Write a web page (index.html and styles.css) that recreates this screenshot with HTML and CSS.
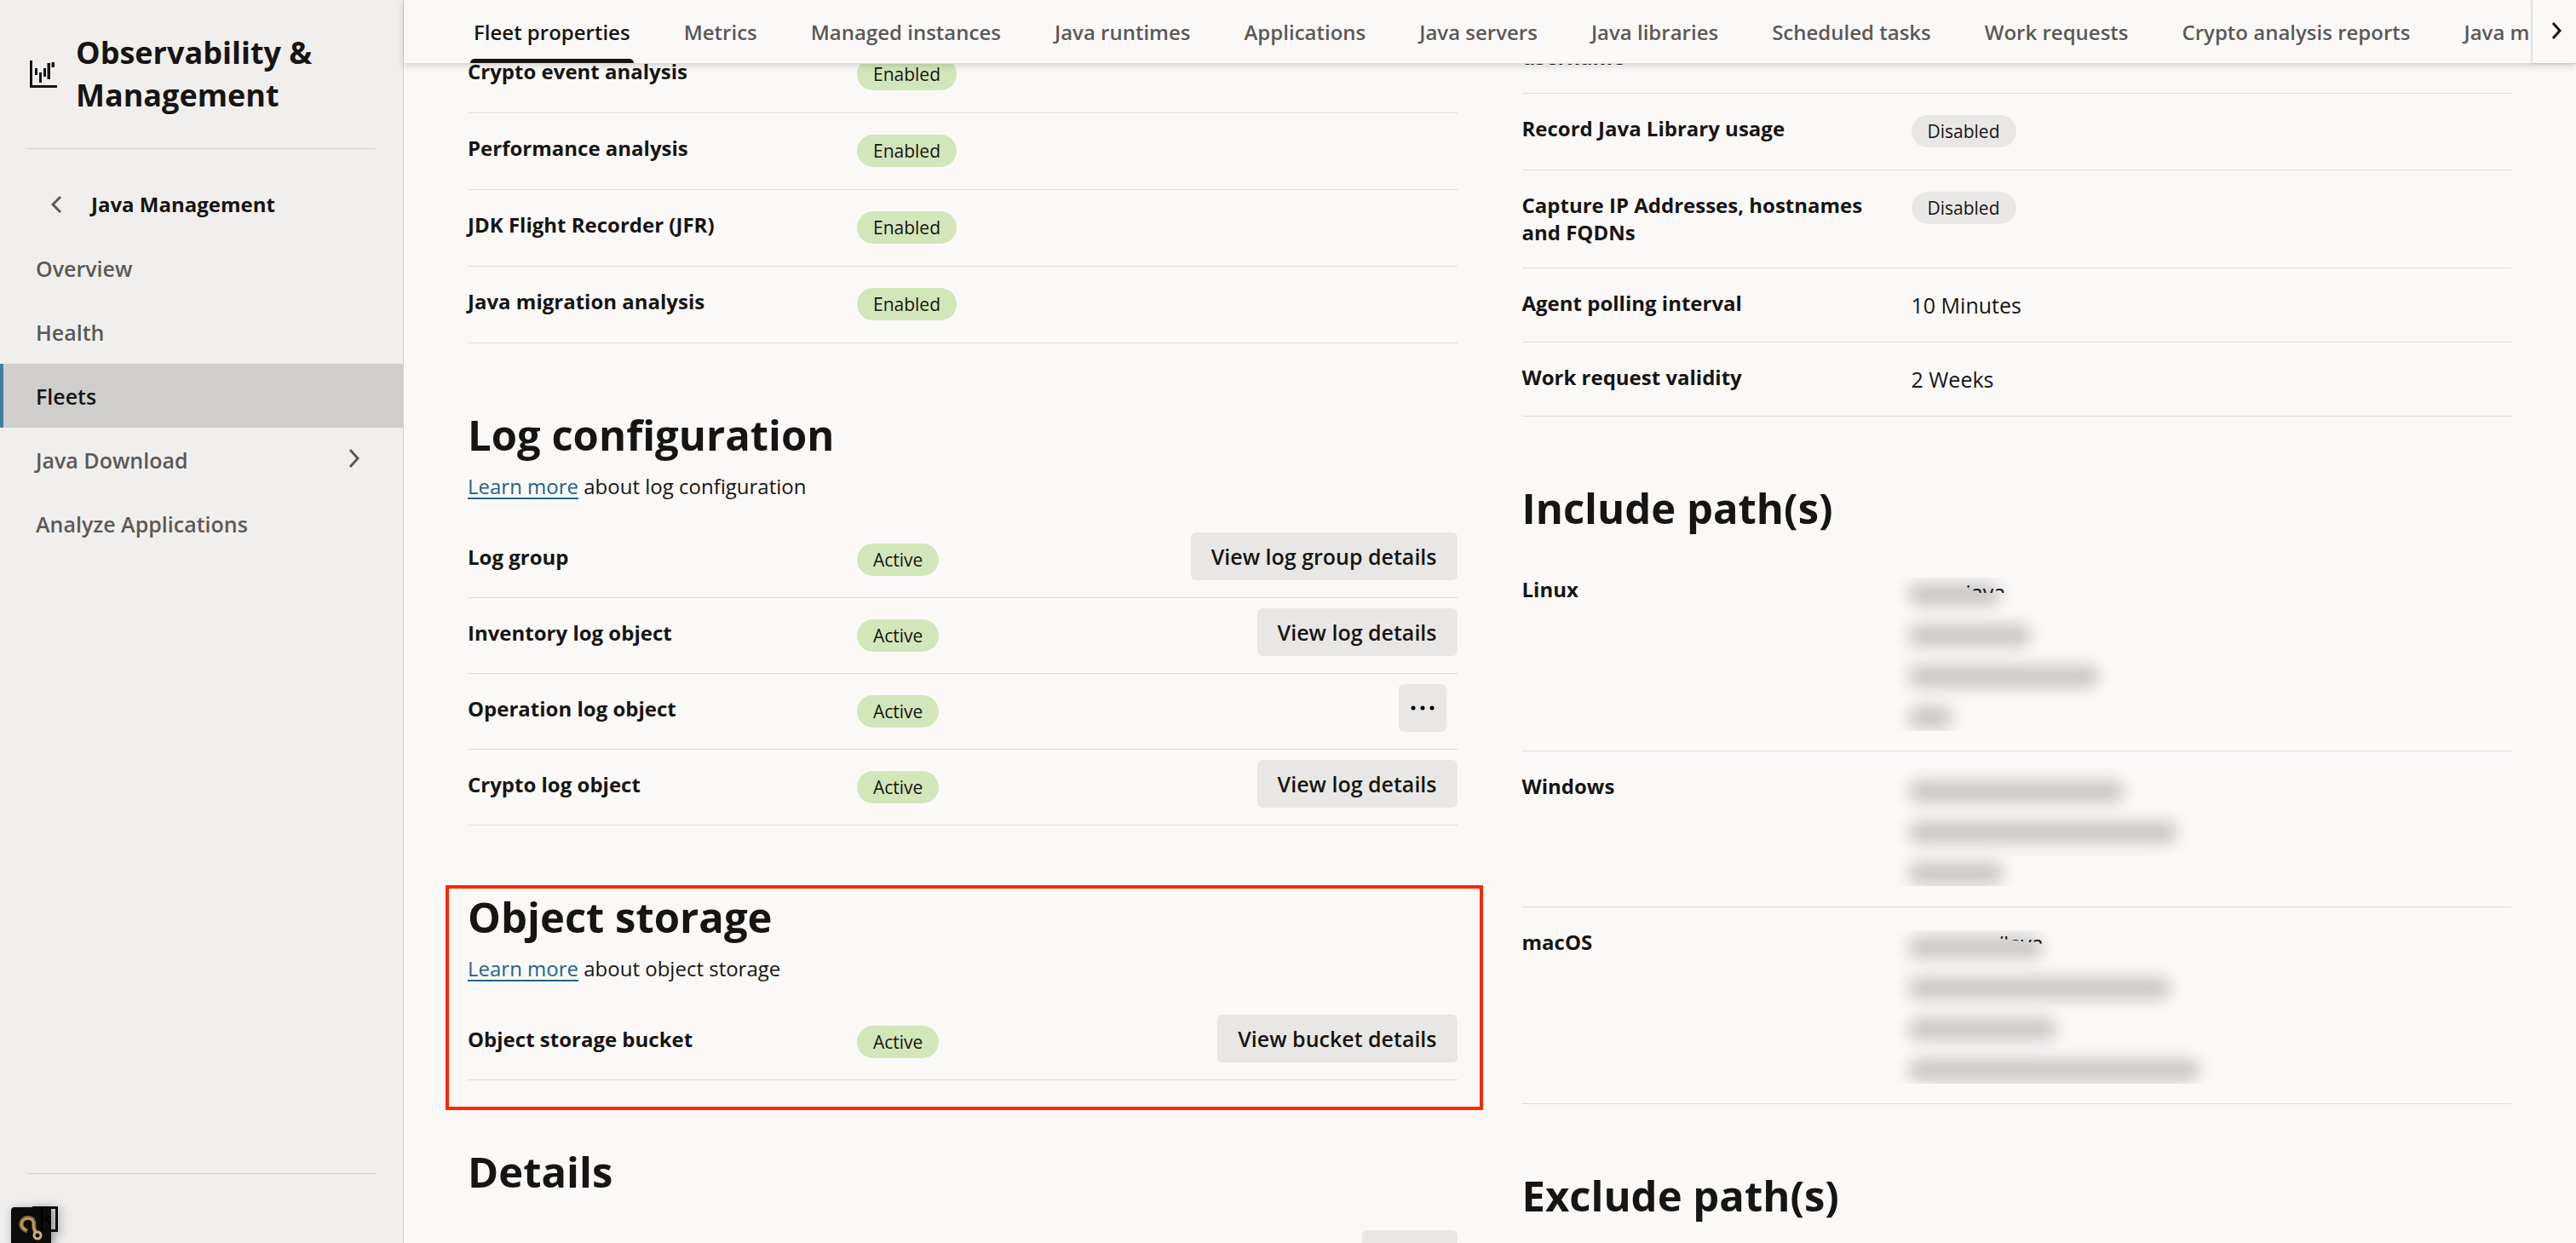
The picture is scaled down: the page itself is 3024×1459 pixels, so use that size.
FILE: index.html
```html
<!DOCTYPE html>
<html lang="en">
<head>
<meta charset="utf-8">
<title>Fleet properties - Java Management</title>
<link rel="stylesheet" href="styles.css">
</head>
<body>
<div class="app">
  <aside class="sidebar">
    <div class="service">
      <svg class="service-icon" viewBox="0 0 32 32" aria-hidden="true"><path fill="currentColor" d="M0 0h3v29h29v3H0zM6 9h3v8H6zM11 14h3v12h-3zM16 9h3v10h-3zM20.500 3h3.500v19h-3.500zM25.500 2h3.500v6h-3.500z"/></svg>
      <h1 class="service-name">Observability &amp; Management</h1>
    </div>
    <nav class="nav" aria-label="Java Management">
      <a class="nav-back" href="#"><svg viewBox="0 0 12 20" aria-hidden="true"><path d="M11 1 2 10l9 9"/></svg>Java Management</a>
      <a class="nav-link" href="#">Overview</a>
      <a class="nav-link" href="#">Health</a>
      <a class="nav-link is-current" href="#" aria-current="page">Fleets</a>
      <a class="nav-link" href="#">Java Download<svg viewBox="0 0 14 22" aria-hidden="true"><path d="M2 1l9 10-9 10"/></svg></a>
      <a class="nav-link" href="#">Analyze Applications</a>
    </nav>
    <div class="sidebar-foot">
      <button class="help" type="button" aria-label="Help">
        <svg viewBox="0 0 56 44" aria-hidden="true">
          <rect x="0" y="1" width="47" height="50" rx="4" fill="#0c0c0c"/>
          <path d="M26.500 1.500h27v27h-27z" fill="none" stroke="#0b0b0b" stroke-width="3"/>
          <path d="M36 2v26M46 10l-5 5 5 5" fill="none" stroke="#000" stroke-width="3"/>
          <path d="M19 29C12 26 11 22 12.500 18c3-6 12-6 14 0 1 4-1 8 2.500 12" fill="none" stroke="#8a6f38" stroke-width="5"/>
          <path d="M18 28C13 26 11 22 13 18c3-5 11-5 13 0 1 4-1 8 3 12" fill="none" stroke="#c5a564" stroke-width="2"/>
          <circle cx="31" cy="34" r="4" fill="#0c0c0c" stroke="#d0b273" stroke-width="3"/>
        </svg>
      </button>
    </div>
  </aside>

  <main class="main">
    <header class="tabbar">
      <nav class="tabs" aria-label="Fleet">
        <a class="tab is-active" href="#">Fleet properties</a>
        <a class="tab" href="#">Metrics</a>
        <a class="tab" href="#">Managed instances</a>
        <a class="tab" href="#">Java runtimes</a>
        <a class="tab" href="#">Applications</a>
        <a class="tab" href="#">Java servers</a>
        <a class="tab" href="#">Java libraries</a>
        <a class="tab" href="#">Scheduled tasks</a>
        <a class="tab" href="#">Work requests</a>
        <a class="tab" href="#">Crypto analysis reports</a>
        <a class="tab" href="#">Java migration analysis reports</a>
      </nav>
      <button class="tab-next" type="button" aria-label="Next tabs"><svg viewBox="0 0 12 20" aria-hidden="true"><path d="M2 1l8 9-8 9"/></svg></button>
    </header>

    <div class="content">
      <div class="column column-left">
        <section>
          <dl class="rows">
            <div class="row status-row"><dt>Crypto event analysis</dt><dd><span class="pill on">Enabled</span></dd></div>
            <div class="row status-row"><dt>Performance analysis</dt><dd><span class="pill on">Enabled</span></dd></div>
            <div class="row status-row"><dt>JDK Flight Recorder (JFR)</dt><dd><span class="pill on">Enabled</span></dd></div>
            <div class="row status-row"><dt>Java migration analysis</dt><dd><span class="pill on">Enabled</span></dd></div>
          </dl>
        </section>
        <section>
          <h2>Log configuration</h2>
          <p class="hint"><a href="#">Learn more</a> about log configuration</p>
          <dl class="rows">
            <div class="row"><dt>Log group</dt><dd><span class="pill on">Active</span></dd><dd class="action"><button type="button">View log group details</button></dd></div>
            <div class="row"><dt>Inventory log object</dt><dd><span class="pill on">Active</span></dd><dd class="action"><button type="button">View log details</button></dd></div>
            <div class="row"><dt>Operation log object</dt><dd><span class="pill on">Active</span></dd><dd class="action"><button class="more" type="button" aria-label="More actions"><svg viewBox="0 0 28 6" aria-hidden="true"><circle cx="3" cy="3" r="2.500"/><circle cx="14" cy="3" r="2.500"/><circle cx="25" cy="3" r="2.500"/></svg></button></dd></div>
            <div class="row"><dt>Crypto log object</dt><dd><span class="pill on">Active</span></dd><dd class="action"><button type="button">View log details</button></dd></div>
          </dl>
        </section>
        <section class="highlight">
          <h2>Object storage</h2>
          <p class="hint"><a href="#">Learn more</a> about object storage</p>
          <dl class="rows">
            <div class="row"><dt>Object storage bucket</dt><dd><span class="pill on">Active</span></dd><dd class="action"><button type="button">View bucket details</button></dd></div>
          </dl>
        </section>
        <section>
          <h2>Details</h2>
          <div class="toolbar"><button class="copy" type="button" aria-label="Copy details"></button></div>
        </section>
      </div>

      <div class="column">
        <section>
          <dl class="rows">
            <div class="row"><dt>username</dt><dd></dd></div>
            <div class="row status-row"><dt>Record Java Library usage</dt><dd><span class="pill off">Disabled</span></dd></div>
            <div class="row"><dt>Capture IP Addresses, hostnames and FQDNs</dt><dd><span class="pill off">Disabled</span></dd></div>
            <div class="row"><dt>Agent polling interval</dt><dd>10 Minutes</dd></div>
            <div class="row"><dt>Work request validity</dt><dd>2 Weeks</dd></div>
          </dl>
        </section>
        <section>
          <h2>Include path(s)</h2>
          <dl class="rows">
            <div class="row"><dt>Linux</dt><dd class="paths cut-both">
              <span class="smear" style="width:108px"></span>
              <span class="smear" style="width:144px"></span>
              <span class="smear" style="width:224px"></span>
              <span class="smear" style="width:52px"></span>
              <span class="peek peek-linux">java</span>
            </dd></div>
            <div class="row"><dt>Windows</dt><dd class="paths cut-bottom">
              <span class="smear" style="width:254px"></span>
              <span class="smear" style="width:316px"></span>
              <span class="smear" style="width:112px"></span>
            </dd></div>
            <div class="row"><dt>macOS</dt><dd class="paths cut-both">
              <span class="smear" style="width:158px"></span>
              <span class="smear" style="width:308px"></span>
              <span class="smear" style="width:174px"></span>
              <span class="smear" style="width:342px"></span>
              <span class="peek peek-macos">/Java</span>
            </dd></div>
          </dl>
        </section>
        <section>
          <h2>Exclude path(s)</h2>
        </section>
      </div>
    </div>
  </main>
</div>
</body>
</html>
```

FILE: styles.css
```css
* { box-sizing: border-box; }

body {
  margin: 0;
  font-family: "Open Sans", "Noto Sans", sans-serif;
  font-size: 24px;
  line-height: 36px;
  color: #161513;
  background: #fbf9f8;
}

h1, h2, p, dl, dd { margin: 0; }
a { text-decoration: none; }
svg { display: block; }

.app {
  display: flex;
  height: 100vh;
  overflow: hidden;
}

/* Sidebar */
.sidebar {
  display: flex;
  flex-direction: column;
  flex: 0 0 474px;
  background: #f1efed;
  border-right: 1px solid #d1cfcd;
}

.service {
  display: flex;
  align-items: center;
  gap: 22px;
  margin: 0 32px;
  padding: 37px 0 37px 3px;
  border-bottom: 1px solid #d4d2d0;
}

.service-icon { flex: none; width: 32px; height: 32px; }

.service-name {
  font-size: 36px;
  line-height: 50px;
  font-weight: 700;
}

.nav { padding-top: 27px; }

.nav-back,
.nav-link {
  display: flex;
  align-items: center;
  height: 75px;
  padding-left: 42px;
  font-size: 25px;
  font-weight: 600;
  color: #5b5957;
}

.nav-back {
  padding-left: 60px;
  gap: 35px;
  font-size: 24px;
  font-weight: 700;
  color: #161513;
}

.nav svg {
  fill: none;
  stroke: #5b5957;
  stroke-width: 3;
}

.nav-back svg { width: 12px; height: 20px; }

.nav-link svg {
  width: 14px;
  height: 22px;
  margin: 0 50px 4px auto;
}

.nav-link.is-current {
  color: #161513;
  background: #d0cecc;
  box-shadow: inset 4px 0 #427e9c;
}

.sidebar-foot {
  margin: auto 32px 0;
  height: 82px;
  border-top: 1px solid #d4d2d0;
}

.help {
  display: block;
  margin: 38px 0 0 -19px;
  padding: 0;
  border: 0;
  background: none;
  filter: drop-shadow(3px 2px 6px rgba(0, 0, 0, 0.4));
}

.help svg { width: 56px; height: 44px; }

/* Tab bar */
.main {
  flex: 1;
  min-width: 0;
}

.tabbar {
  position: relative;
  z-index: 1;
  display: flex;
  height: 75px;
  background: #fbf9f8;
  border-bottom: 1px solid #dfddda;
  box-shadow: 0 2px 8px rgba(0, 0, 0, 0.16);
}

.tabs {
  display: flex;
  flex: 1;
  gap: 55px;
  min-width: 0;
  margin-right: 4px;
  padding-left: 78px;
  overflow: hidden;
}

.tab {
  flex: none;
  display: flex;
  align-items: center;
  padding: 2px 4px 0;
  font-weight: 600;
  color: #5b5957;
}

.tab.is-active {
  position: relative;
  color: #161513;
}

.tab.is-active::after {
  content: "";
  position: absolute;
  left: 0;
  right: 0;
  bottom: 0;
  height: 5px;
  background: #161513;
  border-radius: 5px 5px 0 0;
}

.tab-next {
  display: grid;
  place-items: center;
  width: 51px;
  padding: 0 0 3px 5px;
  border: 0;
  background: #fbf9f8;
  box-shadow: -1px 0 3px rgba(0, 0, 0, 0.2);
}

.tab-next svg {
  width: 12px;
  height: 20px;
  fill: none;
  stroke: #161513;
  stroke-width: 3;
}

/* Content, scrolled part of the way under the tab bar */
.content {
  display: grid;
  grid-template-columns: 1fr 1fr;
  gap: 76px;
  margin-top: -49px;
  padding: 0 76px 0 75px;
}

.column-left { padding-top: 17px; }

section + section { margin-top: 77px; }

h2 {
  font-size: 49px;
  line-height: 60px;
  font-weight: 700;
}

h2 + .rows { margin-top: 25px; }

.hint { margin: 13px 0 24px; }

.hint a {
  color: #22638c;
  text-decoration: underline 2px;
  text-underline-offset: 4px;
  text-decoration-skip-ink: none;
}

.row {
  display: grid;
  grid-template-columns: 432px 1fr auto;
  column-gap: 25px;
  align-items: start;
  padding: 25px 0;
  border-bottom: 1px solid #dfddda;
}

.status-row { min-height: 90px; }

.row dt {
  line-height: 32px;
  font-weight: 700;
}

.row dd { font-size: 25px; }

/* A label with nothing beside it keeps the row at one text line */
.row dd:empty { height: 33px; }

.pill {
  display: block;
  width: fit-content;
  padding: 0 19px;
  border-radius: 19px;
  font-size: 21px;
  line-height: 38px;
}

.on { background: #d3e6ba; }
.off { background: #e9e7e5; }

/* The action button is taller than the row's text */
.action { margin: -13px 0; }

.action button,
.copy {
  display: block;
  height: 56px;
  padding: 0 24px;
  border: 0;
  border-radius: 6px;
  background: #e9e7e5;
  font: inherit;
  font-weight: 600;
  color: #161513;
}

.action .more {
  width: 56px;
  margin-right: 13px;
  padding: 0 14px;
}

.toolbar {
  display: flex;
  justify-content: flex-end;
  margin-top: 39px;
}

.copy { width: 112px; }

/* Redacted paths */
.paths {
  position: relative;
  display: grid;
  grid-auto-rows: 48px;
  align-items: center;
  margin: -6px 0 -10px -8px;
  padding: 4px 0 0 4px;
}

.smear {
  height: 26px;
  border-radius: 13px;
  background: #c9c7c5;
  filter: blur(9px);
}

.cut-both { clip-path: inset(8px 0 8px -24px); }
.cut-bottom { clip-path: inset(-24px 0 9px -24px); }

/* Sliver of a path left showing above the redaction */
.peek { position: absolute; }

.peek-linux {
  top: 7px;
  left: 72px;
  clip-path: polygon(0 0, 100% 0, 100% 19px, 12px 19px, 0 12px);
}

.peek-macos {
  top: 5px;
  left: 107px;
  clip-path: polygon(0 0, 100% 0, 100% 19px, 0 12px);
}

/* Section highlight drawn round its content */
.highlight { position: relative; }

.highlight::before {
  content: "";
  position: absolute;
  inset: -7px -30px -35px -26px;
  border: 4px solid #ff2600;
  pointer-events: none;
}
```
